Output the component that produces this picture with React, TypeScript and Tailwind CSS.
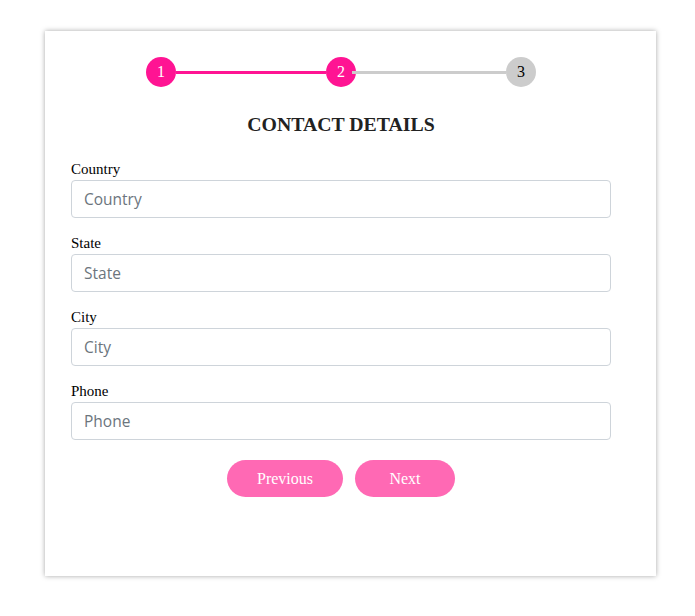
const fields = ["Country", "State", "City", "Phone"];

const Step = ({ n, active }: { n: number; active: boolean }) => (
  <div
    className={`relative w-[30px] h-[30px] rounded-full flex items-center justify-center text-[16px] ${
      active ? "bg-[#ff1493] text-white" : "bg-[#cccccc] text-black"
    }`}
  >
    {n}
  </div>
);

export default function App() {
  return (
    <div className="min-h-screen bg-white pt-[31px] pl-[45px] font-['Liberation_Serif','Times_New_Roman',serif]">
      <div className="w-[611px] h-[545px] bg-white shadow-[0_0_5px_rgba(0,0,0,0.35)] pt-[26px] pl-[26px]">
        <div className="w-[540px]">
          <div className="flex items-center justify-center">
            <Step n={1} active />
            <div className="w-[150px] h-[3px] bg-[#ff1493]" />
            <Step n={2} active />
            <div className="relative w-[154px] h-[3px] -ml-[4px] bg-[#cccccc]" />
            <Step n={3} active={false} />
          </div>

          <h2 className="mt-[26px] text-center text-[19.8px] leading-[23px] font-bold text-[#222]">
            CONTACT DETAILS
          </h2>

          <form className="mt-[24px] flex flex-col gap-[16px]">
            {fields.map((f) => (
              <div key={f} className="flex flex-col">
                <label className="text-[15px] leading-[18px] mb-[2px] text-black">{f}</label>
                <input
                  placeholder={f}
                  className="h-[38px] w-full rounded-[4px] border border-[#ced4da] px-[12px] text-[15.5px] text-[#495057] placeholder:text-[#6c757d] font-['Open_Sans',sans-serif] outline-none"
                />
              </div>
            ))}
          </form>

          <div className="mt-[20px] flex justify-center gap-[12px]">
            <button className="w-[116px] h-[37px] rounded-full bg-[#ff69b4] text-white text-[16px]">
              Previous
            </button>
            <button className="w-[100px] h-[37px] rounded-full bg-[#ff69b4] text-white text-[16px]">
              Next
            </button>
          </div>
        </div>
      </div>
    </div>
  );
}
